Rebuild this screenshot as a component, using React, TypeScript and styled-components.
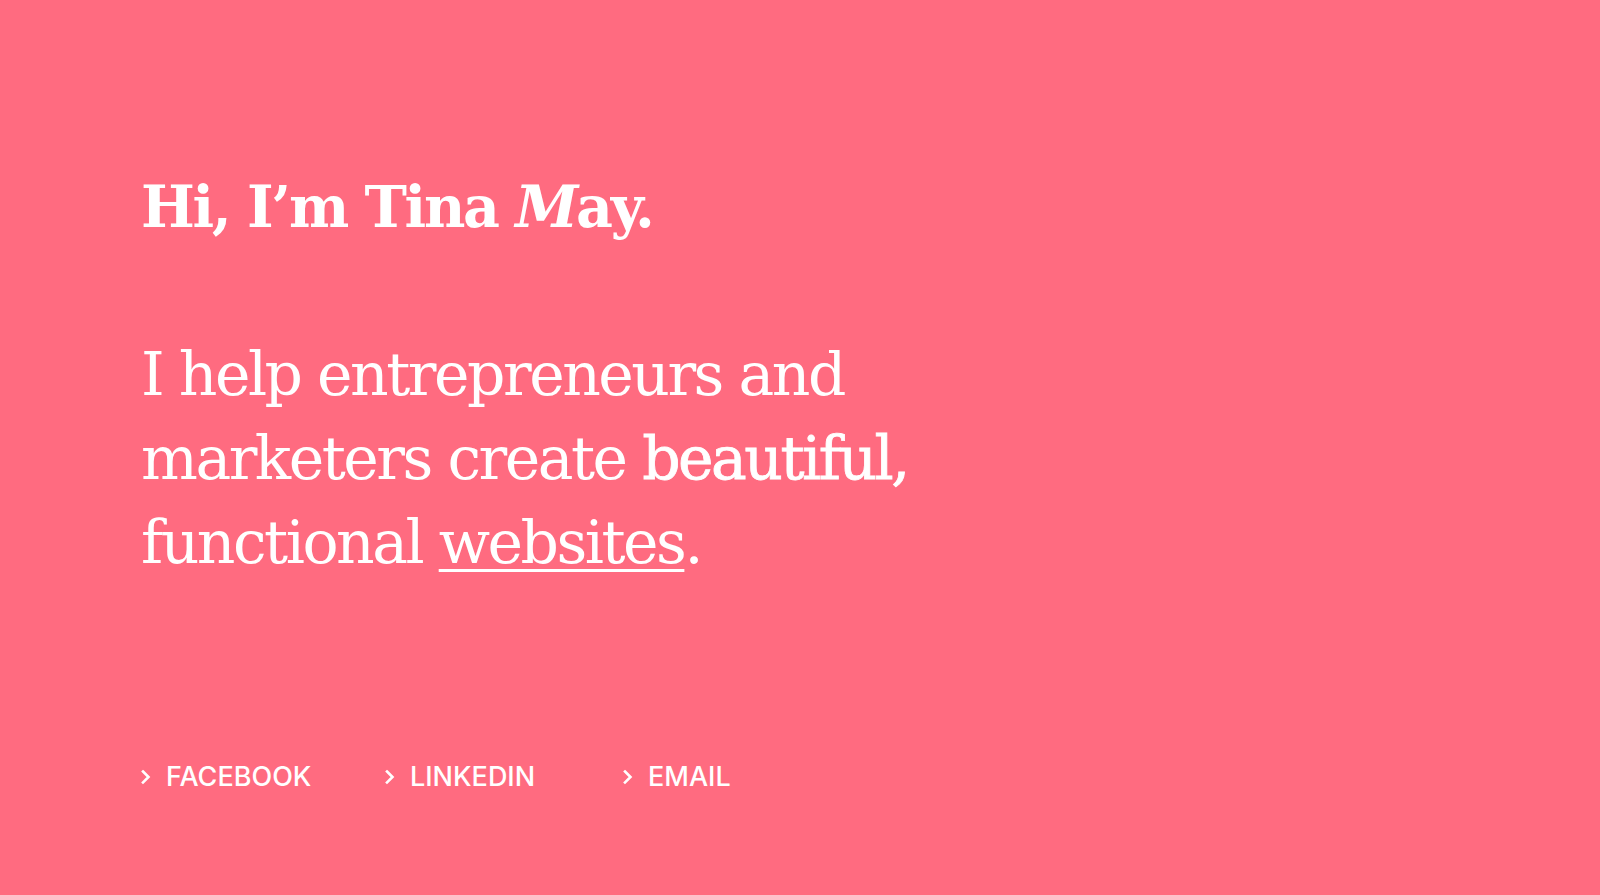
import React from "react";
import styled, { createGlobalStyle } from "styled-components";

const Global = createGlobalStyle`
  html, body { margin: 0; padding: 0; background: #ff6b80; }
  body { font-family: "DejaVu Serif", serif; color: #ffffff; }
`;

const Page = styled.main`
  min-height: 895px;
  box-sizing: border-box;
  padding: 171px 0 0 141px;
  display: flex;
  flex-direction: column;
`;

const Heading = styled.h1`
  margin: 0;
  font-family: "DejaVu Serif", serif;
  font-weight: 700;
  font-size: 57px;
  line-height: 72px;
  letter-spacing: -2.3px;
  font-variant-ligatures: none;
  color: #fff;
`;

const Em = styled.em`
  font-style: italic;
`;

const Lead = styled.p`
  margin: 89px 0 0;
  font-family: "DejaVu Serif", serif;
  font-weight: 400;
  font-size: 60px;
  line-height: 84px;
  letter-spacing: -2.5px;
  font-variant-ligatures: none;
  color: #fff;
`;

const Strong = styled.span`
  -webkit-text-stroke: 0.8px #fff;
`;

const Underlined = styled.a`
  color: #fff;
  text-decoration: underline;
  text-decoration-thickness: 3px;
  text-underline-offset: 6px;
`;

const Links = styled.nav`
  margin-top: 177px;
  display: grid;
  grid-template-columns: 244px 238px auto;
`;

const LinkItem = styled.a`
  display: flex;
  align-items: center;
  gap: 15px;
  color: #fff;
  text-decoration: none;
  font-family: Inter, "Noto Sans", sans-serif;
  font-weight: 500;
  font-size: 27px;
  line-height: 32px;
`;

const Chevron = styled.svg`
  flex: none;
  width: 10px;
  height: 16px;
`;

const links = ["FACEBOOK", "LINKEDIN", "EMAIL"];

export default function App() {
  return (
    <>
      <Global />
      <Page>
        <Heading>
          Hi, I’m Tina <Em>M</Em>ay.
        </Heading>
        <Lead>
          I help entrepreneurs and
          <br />
          marketers create <Strong>beautiful,</Strong>
          <br />
          functional <Underlined href="#">websites</Underlined>.
        </Lead>
        <Links>
          {links.map((l) => (
            <LinkItem key={l} href="#">
              <Chevron viewBox="0 0 10 16" aria-hidden="true">
                <path
                  d="M2 2.5 L7.5 8 L2 13.5"
                  fill="none"
                  stroke="#fff"
                  strokeWidth="2.6"
                  strokeLinecap="square"
                />
              </Chevron>
              {l}
            </LinkItem>
          ))}
        </Links>
      </Page>
    </>
  );
}
